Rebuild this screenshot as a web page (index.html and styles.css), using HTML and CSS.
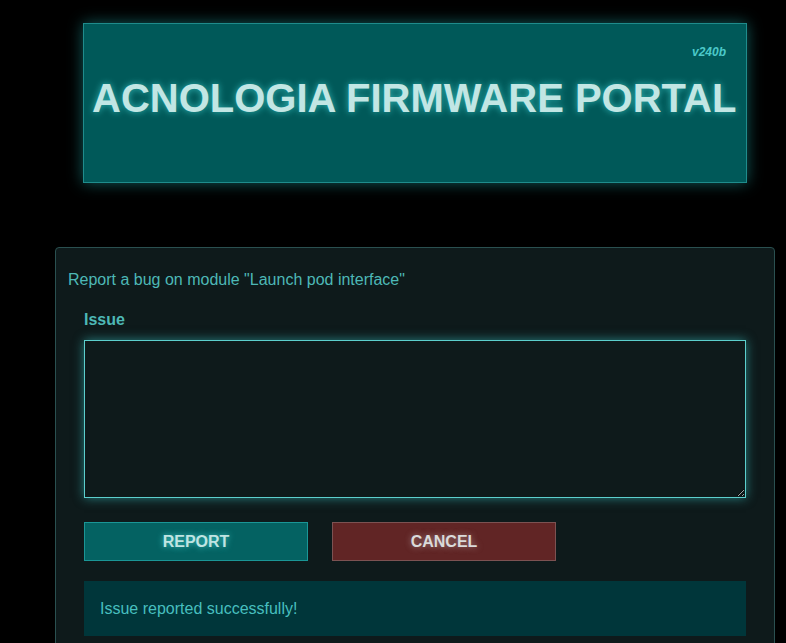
FILE: index.html
```html
<!DOCTYPE html>
<html lang="en">
<head>
<meta charset="utf-8">
<title>Acnologia Firmware Portal</title>
<link rel="stylesheet" href="styles.css">
</head>
<body>
<header class="banner">
  <div class="version">v240b</div>
  <h1 class="title">ACNOLOGIA FIRMWARE PORTAL</h1>
</header>
<main class="panel">
  <p class="intro">Report a bug on module "Launch pod interface"</p>
  <form class="form">
    <label class="label" for="issue">Issue</label>
    <textarea id="issue" class="issue" autofocus></textarea>
    <div class="actions">
      <button type="button" class="btn btn-report">REPORT</button>
      <button type="button" class="btn btn-cancel">CANCEL</button>
    </div>
    <div class="notice">Issue reported successfully!</div>
  </form>
</main>
</body>
</html>
```
FILE: styles.css
```css
html, body {
  margin: 0;
  padding: 0;
  background: #000;
  font-family: "Liberation Sans", Arial, sans-serif;
  overflow: hidden;
}

.banner {
  box-sizing: border-box;
  width: 664px;
  height: 160px;
  margin: 23px 0 0 83px;
  padding: 21px 20px 0 8px;
  background: #005959;
  border: 1px solid #1f8c8c;
  box-shadow: 0 0 14px rgba(40, 200, 200, 0.45);
}

.version {
  text-align: right;
  font-size: 12px;
  line-height: 14px;
  font-weight: bold;
  font-style: italic;
  color: #4cc9c9;
}

.title {
  margin: 16px 0 0 0;
  text-align: center;
  font-size: 40px;
  line-height: 46px;
  font-weight: bold;
  color: #c2e6e4;
  white-space: nowrap;
  text-shadow: 0 0 7px rgba(70, 220, 220, 0.7);
}

.panel {
  box-sizing: border-box;
  width: 720px;
  min-height: 420px;
  margin: 64px 0 0 55px;
  padding: 23px 12px 12px 12px;
  background: #0e1a1b;
  border: 1px solid #2a5050;
  border-radius: 4px;
}

.intro {
  margin: 0;
  font-size: 16px;
  line-height: 18px;
  color: #4db8b6;
}

.form {
  display: flex;
  flex-direction: column;
  margin: 22px 16px 0 16px;
}

.label {
  font-size: 16px;
  line-height: 18px;
  font-weight: bold;
  color: #4db8b6;
}

.issue {
  box-sizing: border-box;
  width: 662px;
  height: 158px;
  margin-top: 11px;
  padding: 15px 30px;
  background: #0e1a1b;
  border: 1px solid #5ccfcd;
  border-radius: 0;
  outline: none;
  color: #7fd6d4;
  caret-color: #1d8c8a;
  font-family: "Liberation Sans", Arial, sans-serif;
  font-size: 16px;
  line-height: 20px;
  box-shadow: 0 0 10px rgba(60, 210, 210, 0.55);
}

.actions {
  display: flex;
  gap: 24px;
  margin-top: 24px;
}

.btn {
  box-sizing: border-box;
  width: 224px;
  height: 39px;
  padding: 0;
  font-family: "Liberation Sans", Arial, sans-serif;
  font-size: 16px;
  font-weight: bold;
  cursor: pointer;
}

.btn-report {
  background: #046262;
  border: 1px solid #1a9696;
  color: #c0e4e2;
  text-shadow: 0 0 6px rgba(80, 230, 230, 0.8);
}

.btn-cancel {
  background: #612525;
  border: 1px solid #7c5252;
  color: #dadada;
  text-shadow: 0 0 6px rgba(230, 230, 230, 0.5);
}

.notice {
  margin-top: 20px;
  padding: 18px 16px;
  background: #00363a;
  font-size: 16px;
  line-height: 19px;
  color: #47bfbf;
}
```
